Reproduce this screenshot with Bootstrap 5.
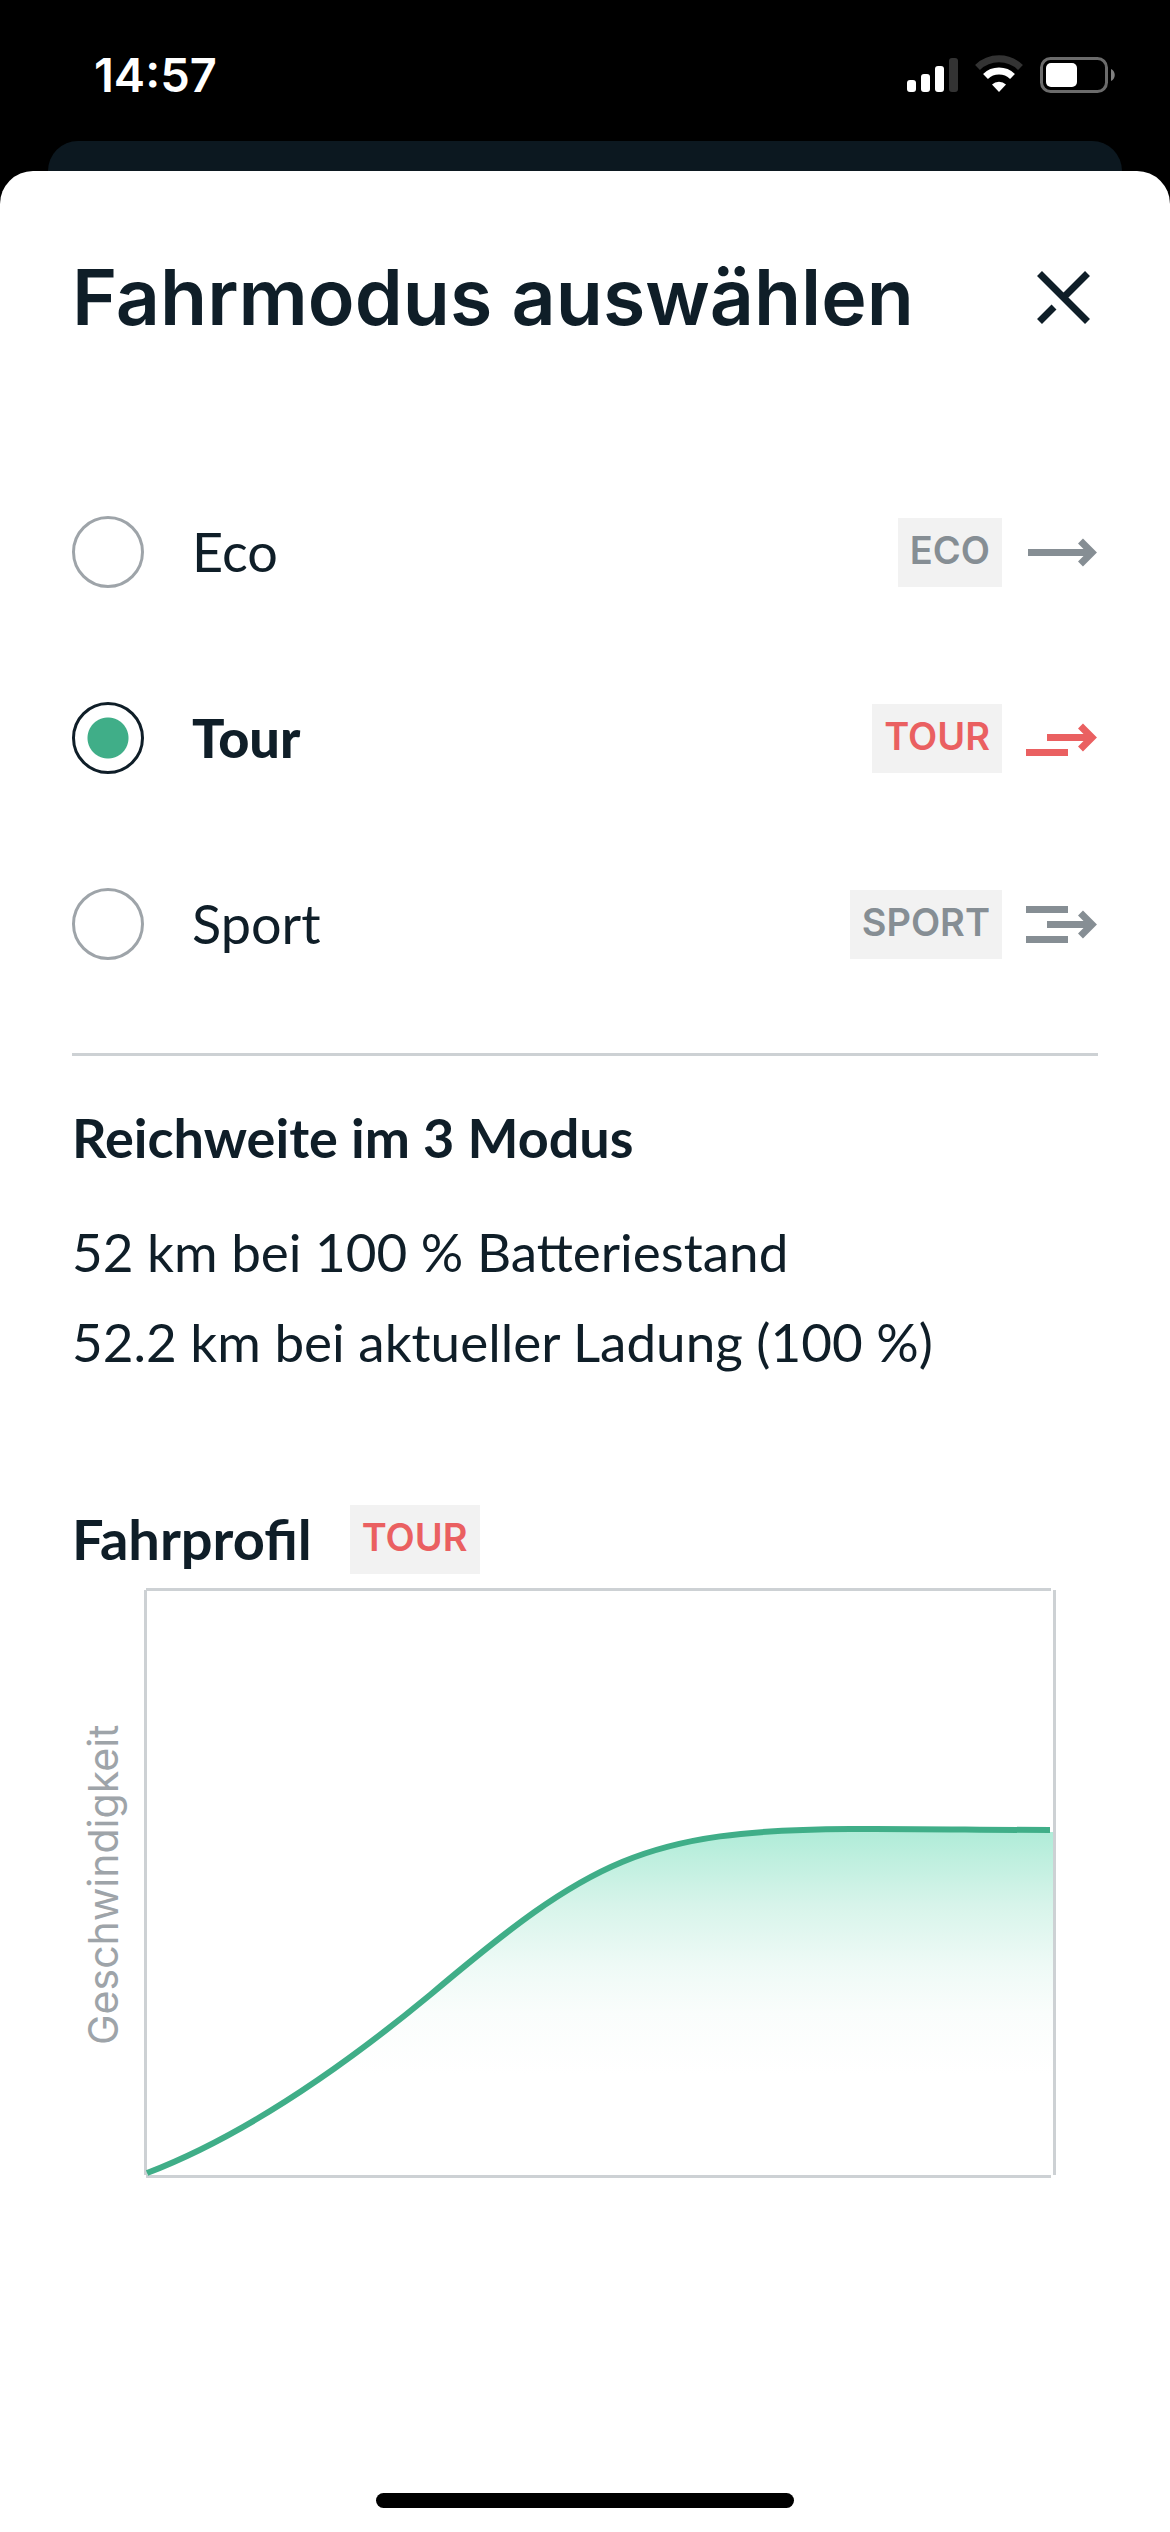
<!DOCTYPE html>
<html lang="de">
<head>
<meta charset="utf-8">
<meta name="viewport" content="width=device-width, initial-scale=1">
<title>Fahrmodus auswählen</title>
<link href="https://cdn.jsdelivr.net/npm/bootstrap@5.3.0/dist/css/bootstrap.min.css" rel="stylesheet">
<style>
  :root { --ink: #0f1e28; --grey: #868e94; --soft: #9ea4a9; --line: #cdd1d4; --green: #40ae88; --red: #ea6061; }
  body { font-family: Lato, "Noto Sans", sans-serif; font-size: 54px; line-height: 90px; color: var(--ink); background: #000; }
  .geo { font-family: Inter, "Noto Sans", sans-serif; }
  .status-bar { height: 141px; padding: 8px 54px 0 94px; color: #fff; font-size: 47px; }
  .back-sheet { height: 30px; margin: 0 48px; background: #0c1820; border-radius: 30px 30px 0 0; }
  .sheet { background: #fff; border-radius: 33px 33px 0 0; padding: 72px 72px 24px; }
  .sheet-title { font-size: 77px; line-height: 108px; font-weight: 600; }
  .close-btn { width: 72px; height: 72px; }
  .mode-list { margin-top: 132px; gap: 48px; }
  .mode-row { height: 138px; cursor: pointer; }
  .mode-row input { appearance: none; width: 72px; height: 72px; margin: 0 48px 0 0; border: 3px solid var(--soft); border-radius: 50%; flex: none; }
  .mode-row input:checked { border-color: var(--ink); background: radial-gradient(circle, var(--green) 20px, transparent 21px); }
  .mode-row input:checked + span { font-weight: 900; }
  .tag { height: 69px; padding: 0 12px 4px; background: #f2f2f2; color: var(--grey); font-size: 38px; line-height: 65px; font-weight: 600; }
  .active-mode { color: var(--red); }
  .mode-icon { color: var(--grey); margin-left: 24px; }
  .mode-icon.active-mode { color: var(--red); }
  .rule { border-top: 3px solid var(--line); opacity: 1; margin: 60px 0 37px; }
  .section-title { font-size: 54px; line-height: 90px; font-weight: 700; }
  .range-text { font-size: 53px; }
  .profile { margin-top: 107px; }
  .profile-title { font-size: 56px; margin: 0 38px 0 0; }
  .axis-label { writing-mode: vertical-rl; transform: rotate(180deg); font-size: 41px; line-height: 62px; color: var(--soft); width: 72px; flex: none; padding-bottom: 8px; }
  .chart { min-width: 0; }
  .home-bar { width: 418px; height: 15px; border-radius: 8px; background: #000; }
</style>
<script src="https://cdn.jsdelivr.net/npm/bootstrap@5.3.0/dist/js/bootstrap.bundle.min.js"></script>
</head>
<body class="min-vh-100 d-flex flex-column">
<header class="status-bar geo d-flex align-items-center justify-content-between fw-semibold">
  <span>14:57</span>
  <svg width="210" height="40" viewBox="0 0 210 40" aria-hidden="true">
    <g fill="#fff"><rect x="1" y="25" width="9" height="12" rx="3"/><rect x="15" y="19" width="9" height="18" rx="3"/><rect x="29" y="11" width="9" height="26" rx="3"/></g>
    <rect x="43" y="3" width="9" height="34" rx="3" fill="#333"/>
    <path d="M71.500 12.500A31 31 0 0 1 114.500 12.500" fill="none" stroke="#333" stroke-width="7"/>
    <path d="M79.500 21.500A19.500 19.500 0 0 1 106.500 21.500" fill="none" stroke="#fff" stroke-width="7"/>
    <path d="M93 37l-7-7.500a10 10 0 0 1 14 0z" fill="#fff"/>
    <rect x="135.500" y="3.500" width="65" height="33" rx="9" fill="none" stroke="#6b6b6b" stroke-width="3"/>
    <rect x="140" y="8" width="31" height="24" rx="5" fill="#fff"/>
    <path d="M205 14c5 2 5 10 0 12z" fill="#808080"/>
  </svg>
</header>
<div class="back-sheet"></div>
<main class="sheet flex-grow-1 d-flex flex-column">
  <div class="d-flex align-items-center justify-content-between">
    <h1 class="sheet-title geo m-0">Fahrmodus auswählen</h1>
    <button type="button" class="close-btn btn p-0 border-0 d-flex" aria-label="Schließen">
      <svg width="72" height="72" viewBox="0 0 72 72" fill="none" stroke="#0f1e28" stroke-width="7"><path d="M13.500 12.500L61.500 60.500M61.500 12.500L38.500 35.500M13.500 60.500L28 46"/></svg>
    </button>
  </div>
  <form class="mode-list d-flex flex-column">
    <label class="mode-row d-flex align-items-center"><input type="radio" name="mode"><span class="me-auto">Eco</span>
      <span class="tag geo">ECO</span>
      <svg class="mode-icon" width="72" height="72" viewBox="0 0 72 72" fill="none" stroke="currentColor" stroke-width="7"><path d="M2 36.500H65M54.500 25L66 36.500L54.500 48"/></svg></label>
    <label class="mode-row d-flex align-items-center"><input type="radio" name="mode" checked><span class="me-auto">Tour</span>
      <span class="tag geo active-mode">TOUR</span>
      <svg class="mode-icon active-mode" width="72" height="72" viewBox="0 0 72 72" fill="none" stroke="currentColor" stroke-width="7"><path d="M21 35.500H65M54.500 24L66 35.500L54.500 47M0 50.500H42"/></svg></label>
    <label class="mode-row d-flex align-items-center"><input type="radio" name="mode"><span class="me-auto">Sport</span>
      <span class="tag geo">SPORT</span>
      <svg class="mode-icon" width="72" height="72" viewBox="0 0 72 72" fill="none" stroke="currentColor" stroke-width="7"><path d="M21 36.500H65M54.500 25L66 36.500L54.500 48M0 21.500H42M0 51.500H42"/></svg></label>
  </form>
  <hr class="rule">
  <section>
    <h2 class="section-title mb-4">Reichweite im 3 Modus</h2>
    <p class="range-text m-0">52 km bei 100 % Batteriestand</p>
    <p class="range-text m-0">52.2 km bei aktueller Ladung (100 %)</p>
  </section>
  <section class="profile">
    <div class="d-flex align-items-center">
      <h2 class="section-title profile-title">Fahrprofil</h2>
      <span class="tag geo active-mode">TOUR</span>
    </div>
    <div class="d-flex align-items-stretch">
      <div class="axis-label geo text-center">Geschwindigkeit</div>
      <svg class="chart flex-grow-1" viewBox="0 0 954 594" role="img" aria-label="Fahrprofil Tour">
        <defs><linearGradient id="fade" gradientUnits="userSpaceOnUse" x1="0" y1="248" x2="0" y2="490"><stop offset="0" stop-color="#b0ecd8"/><stop offset=".3" stop-color="#d7f4ea"/><stop offset=".55" stop-color="#eefaf6"/><stop offset=".75" stop-color="#fafdfc"/><stop offset="1" stop-color="#fff"/></linearGradient></defs>
        <path fill="url(#fade)" d="M3 591C97 555 194 489 286 413C446 278 500 248 706 247C773 247 840 248 909 248V591Z"/>
        <path fill="none" stroke="#cdd1d4" stroke-width="3" d="M1.500 6V591M2 5.500H907M2 592.500H907M910.500 6V591"/>
        <path fill="none" stroke="#40ae88" stroke-width="6" d="M3 589C97 553 194 487 286 411C446 276 500 246 706 245C773 244.500 840 246 906 246"/>
      </svg>
    </div>
  </section>
  <div class="home-bar mt-auto mx-auto"></div>
</main>
</body>
</html>
